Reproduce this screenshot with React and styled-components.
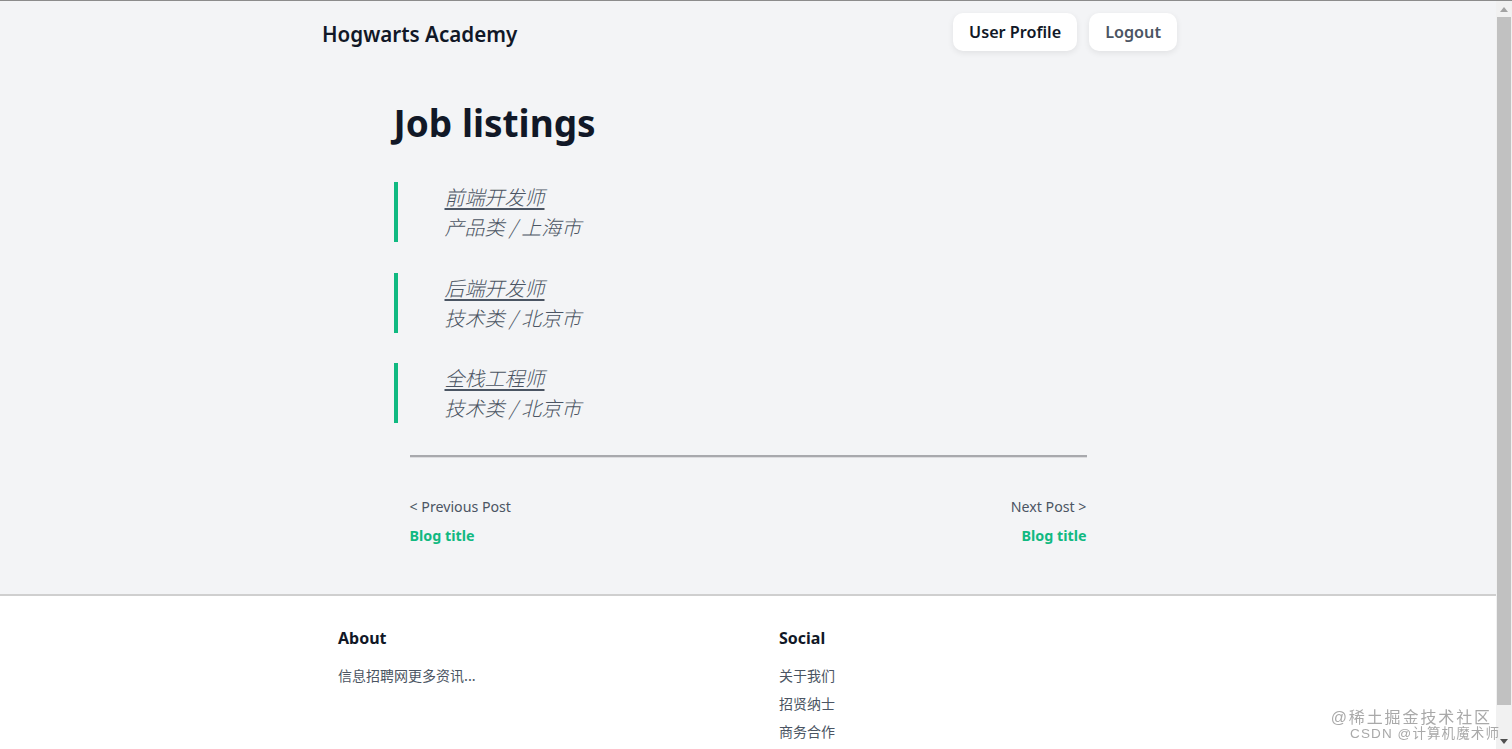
import React from "react";
import styled, { createGlobalStyle } from "styled-components";

const GlobalStyle = createGlobalStyle`
  html, body { margin: 0; padding: 0; overflow: hidden; }
  body {
    background: #f3f4f6;
    font-family: "Noto Sans", "Noto Sans CJK SC", sans-serif;
    color: #111827;
    border-top: 1px solid #8c8c8c;
  }
  * { box-sizing: border-box; }
`;

const Page = styled.div`
  margin-right: 16px;
  display: flex;
  flex-direction: column;
`;

const Header = styled.header`
  width: 856px;
  margin: 0 auto;
  height: 64px;
  display: flex;
  align-items: center;
  justify-content: space-between;
`;

const Brand = styled.div`
  font-size: 20.6px;
  font-weight: 600;
  color: #111827;
  padding-left: 2px;
  padding-top: 1px;
`;

const Actions = styled.div`
  display: flex;
  gap: 12px;
  margin-top: -2px;
  margin-right: -1px;
`;

const NavButton = styled.button`
  height: 38px;
  padding: 0 16px;
  border: none;
  border-radius: 10px;
  background: #ffffff;
  box-shadow: 0 2px 6px rgba(0, 0, 0, 0.08);
  font-family: inherit;
  font-size: 16.2px;
  font-weight: 600;
  color: ${(p) => (p.$muted ? "#4b5563" : "#111827")};
  cursor: pointer;
`;

const Main = styled.main`
  width: 709px;
  margin: 0 auto;
  padding: 34px 0 48px;
`;

const Title = styled.h1`
  margin: 0 0 35px;
  font-size: 37px;
  line-height: 48px;
  font-weight: 700;
  color: #111827;
`;

const List = styled.ul`
  list-style: none;
  margin: 0;
  padding: 0;
  display: flex;
  flex-direction: column;
  gap: 30.5px;
`;

const Item = styled.li`
  border-left: 4px solid #10b981;
  padding-left: 47px;
  font-family: "Noto Sans CJK SC", "Noto Sans", sans-serif;
  font-style: italic;
  font-size: 20px;
  line-height: 30px;
  font-weight: 300;
`;

const JobLink = styled.a`
  display: block;
  color: #4b5563;
  text-decoration: underline;
  text-underline-offset: 3px;
`;

const JobMeta = styled.div`
  color: #4b5563;
`;

const Rule = styled.hr`
  margin: 32px 16px 0;
  border: none;
  border-top: 2px solid #a8a9ad;
  border-bottom: 1px solid #dcdcdf;
  height: 0;
`;

const PostNav = styled.div`
  margin: 38px 16px 0;
  display: flex;
  justify-content: space-between;
`;

const PostCol = styled.div`
  display: flex;
  flex-direction: column;
  gap: 8px;
  align-items: ${(p) => (p.$right ? "flex-end" : "flex-start")};
`;

const PostLabel = styled.span`
  font-size: 14.2px;
  line-height: 21px;
  color: #4b5563;
`;

const PostTitle = styled.a`
  font-size: 14.3px;
  line-height: 21px;
  font-weight: 700;
  color: #10b981;
  text-decoration: none;
`;

const Footer = styled.footer`
  background: #ffffff;
  border-top: 2px solid #cfcfcf;
  min-height: 200px;
`;

const FooterInner = styled.div`
  width: 856px;
  margin: 0 auto;
  padding: 29px 18px 0;
  display: grid;
  grid-template-columns: 441px 1fr;
`;

const FooterCol = styled.div`
  display: flex;
  flex-direction: column;
`;

const FooterHeading = styled.h3`
  margin: 0 0 10px;
  font-size: 16px;
  line-height: 26px;
  font-weight: 700;
  color: #111827;
`;

const FooterText = styled.a`
  font-family: "Noto Sans CJK SC", sans-serif;
  font-size: 14px;
  line-height: 28px;
  color: #4b5563;
  text-decoration: none;
`;

const Scrollbar = styled.div`
  position: fixed;
  top: 1px;
  right: 0;
  bottom: 0;
  width: 16px;
  background: #f1f1f1;
  display: flex;
  flex-direction: column;
  align-items: center;
`;

const Arrow = styled.div`
  height: 16px;
  display: flex;
  align-items: center;
  justify-content: center;
`;

const Thumb = styled.div`
  flex: 1;
  width: 14px;
  margin: 0 0 28px;
  background: #c1c1c1;
`;

const Watermark = styled.div`
  position: fixed;
  right: 12px;
  bottom: 7px;
  display: flex;
  flex-direction: column;
  align-items: flex-end;
  font-family: "Liberation Sans", "Noto Sans CJK SC", sans-serif;
  color: #a9a9a9;
  pointer-events: none;
  z-index: 2;
`;

const WmLine = styled.span`
  font-size: ${(p) => p.$size}px;
  line-height: ${(p) => p.$lh}px;
  letter-spacing: ${(p) => p.$track}px;
  margin-right: ${(p) => p.$shift || 0}px;
`;

const jobs = [
  { title: "前端开发师", meta: "产品类 / 上海市" },
  { title: "后端开发师", meta: "技术类 / 北京市" },
  { title: "全栈工程师", meta: "技术类 / 北京市" },
];

export default function App() {
  return (
    <>
      <GlobalStyle />
      <Page>
        <Header>
          <Brand>Hogwarts Academy</Brand>
          <Actions>
            <NavButton>User Profile</NavButton>
            <NavButton $muted>Logout</NavButton>
          </Actions>
        </Header>
        <Main>
          <Title>Job listings</Title>
          <List>
            {jobs.map((j) => (
              <Item key={j.title}>
                <JobLink href="#">{j.title}</JobLink>
                <JobMeta>{j.meta}</JobMeta>
              </Item>
            ))}
          </List>
          <Rule />
          <PostNav>
            <PostCol>
              <PostLabel>&lt; Previous Post</PostLabel>
              <PostTitle href="#">Blog title</PostTitle>
            </PostCol>
            <PostCol $right>
              <PostLabel>Next Post &gt;</PostLabel>
              <PostTitle href="#">Blog title</PostTitle>
            </PostCol>
          </PostNav>
        </Main>
        <Footer>
          <FooterInner>
            <FooterCol>
              <FooterHeading>About</FooterHeading>
              <FooterText>信息招聘网更多资讯...</FooterText>
            </FooterCol>
            <FooterCol>
              <FooterHeading>Social</FooterHeading>
              <FooterText href="#">关于我们</FooterText>
              <FooterText href="#">招贤纳士</FooterText>
              <FooterText href="#">商务合作</FooterText>
            </FooterCol>
          </FooterInner>
        </Footer>
      </Page>
      <Scrollbar>
        <Arrow>
          <svg width="8" height="5" viewBox="0 0 8 5">
            <path d="M0 5 L4 0 L8 5 Z" fill="#a3a3a3" />
          </svg>
        </Arrow>
        <Thumb />
        <Arrow>
          <svg width="8" height="5" viewBox="0 0 8 5">
            <path d="M0 0 L4 5 L8 0 Z" fill="#505050" />
          </svg>
        </Arrow>
      </Scrollbar>
      <Watermark>
        <WmLine $size={16} $lh={17} $track={1.9} $shift={8}>@稀土掘金技术社区</WmLine>
        <WmLine $size={13.5} $lh={16} $track={1.1}>CSDN @计算机魔术师</WmLine>
      </Watermark>
    </>
  );
}
